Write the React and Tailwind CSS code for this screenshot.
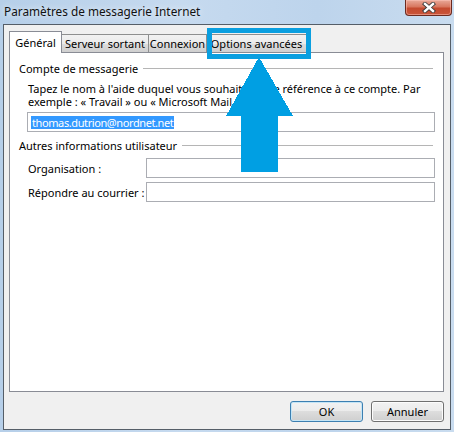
import React from "react";

const F = "font-['Noto_Sans','Liberation_Sans',sans-serif]";

function Tab({ label, w, selected, first }) {
  if (selected) {
    return (
      <div
        className={`relative z-10 -mb-px flex h-[22px] items-start justify-center whitespace-nowrap border border-b-0 border-[#898c95] bg-white pt-[3px] ${w}`}
      >
        <span className="leading-[15px]">{label}</span>
      </div>
    );
  }
  return (
    <div
      className={`${first ? "" : "-ml-px"} flex h-[18px] items-center justify-center whitespace-nowrap border border-b-0 border-[#8e8f8f] bg-[linear-gradient(#f2f2f2_0%,#ebebeb_50%,#dddddd_50%,#cfcfcf_100%)] ${w}`}
    >
      <span className="leading-[15px]">{label}</span>
    </div>
  );
}

function GroupHeader({ label, mt }) {
  return (
    <div className={`flex h-[15px] items-center pl-[9px] pr-[10px] ${mt}`}>
      <span className="leading-[15px] whitespace-nowrap">{label}</span>
      <div className="ml-[5px] h-px flex-1 bg-[#b5b5b5]" />
    </div>
  );
}

function TextBox({ className = "", children }) {
  return (
    <div
      className={`flex h-[20px] items-center border border-[#abadb3] bg-white pl-[2px] ${className}`}
    >
      {children}
    </div>
  );
}

export default function App() {
  return (
    <div
      className={`relative h-[432px] w-[454px] overflow-hidden bg-[linear-gradient(90deg,#b6cfe9,#c6daef_40%,#bdd4ec_70%,#c9dcef)] text-[11px] text-black ${F}`}
    >
      {/* Title bar */}
      <div className="flex h-[24px] items-start justify-between">
        <span className="pl-[4px] pt-[3px] text-[11.8px] leading-[16px] text-[#111] [text-shadow:0_0_6px_rgba(255,255,255,0.9)]">
          Paramètres de messagerie Internet
        </span>
        <div className="mr-[2px] flex h-[16px] w-[47px] items-center justify-center rounded-b-[4px] border border-t-0 border-[#6b2a1f] bg-[linear-gradient(#e9a999_0%,#d8775f_45%,#c44a2f_55%,#c9553a_100%)] shadow-[inset_0_0_0_1px_rgba(255,200,190,0.5)]">
          <svg width="14" height="11" viewBox="0 0 14 11">
            <path d="M3 2 L11 9 M11 2 L3 9" stroke="#3a3a3a" strokeWidth="4.2" strokeLinecap="square" />
            <path d="M3 2 L11 9 M11 2 L3 9" stroke="#ffffff" strokeWidth="2.4" strokeLinecap="square" />
          </svg>
        </div>
      </div>

      {/* Window body */}
      <div className="mx-[3px] flex h-[406px] flex-col border border-[#555e68] bg-[#f0f0f0] pl-[5px] pr-[6px] pt-[7px] pb-[7px]">
        {/* Tabs */}
        <div className="flex h-[20px] items-end">
          <Tab label="Général" w="w-[53px]" selected />
          <Tab label="Serveur sortant" w="w-[88px] -ml-px" first />
          <Tab label="Connexion" w="w-[59px]" />
          <Tab label="Options avancées" w="w-[101px]" />
        </div>

        {/* Panel */}
        <div className="flex h-[340px] flex-col border border-[#898c95] bg-white">
          <GroupHeader label="Compte de messagerie" mt="mt-[8px]" />
          <p className="mt-[6px] pl-[18px] leading-[13px] whitespace-nowrap">
            Tapez le nom à l'aide duquel vous souhaitez faire référence à ce compte. Par
            <br />
            exemple : « Travail » ou « Microsoft Mail Server ».
          </p>
          <TextBox className="ml-[17px] mr-[8px] mt-[4px]">
            <span className="ml-px inline-block h-[13px] bg-[#3399ff] px-px leading-[13px] tracking-[-0.4px] text-white">
              thomas.dutrion@nordnet.net
            </span>
          </TextBox>

          <GroupHeader label="Autres informations utilisateur" mt="mt-[6px]" />
          <div className="mt-[5px] flex items-center">
            <span className="w-[136px] shrink-0 whitespace-nowrap pl-[18px] leading-[15px]">Organisation :</span>
            <TextBox className="mr-[8px] flex-1" />
          </div>
          <div className="mt-[4px] flex items-center">
            <span className="w-[136px] shrink-0 whitespace-nowrap pl-[18px] leading-[15px]">Répondre au courrier :</span>
            <TextBox className="mr-[8px] flex-1" />
          </div>
        </div>

        {/* Buttons */}
        <div className="mt-[9px] flex justify-end gap-[8px]">
          <button className="flex h-[21px] w-[73px] items-center justify-center rounded-[3px] border border-[#3c7fb1] bg-[linear-gradient(#f2f2f2_0%,#ebebeb_50%,#dddddd_50%,#cfcfcf_100%)] leading-[15px] shadow-[inset_0_0_0_1px_#c4e5f6]">
            OK
          </button>
          <button className="flex h-[21px] w-[73px] items-center justify-center rounded-[3px] border border-[#707070] bg-[linear-gradient(#f2f2f2_0%,#ebebeb_50%,#dddddd_50%,#cfcfcf_100%)] leading-[15px] shadow-[inset_0_0_0_1px_#fcfcfc]">
            Annuler
          </button>
        </div>
      </div>

      {/* Highlight box around "Options avancées" tab */}
      <div className="pointer-events-none absolute left-[207px] top-[28px] h-[31px] w-[104px] border-[5px] border-[#0a9fe0]" />

      {/* Arrow */}
      <svg
        className="pointer-events-none absolute left-0 top-0"
        width="454"
        height="432"
        viewBox="0 0 454 432"
      >
        <polygon
          points="259,57 293,116 278,116 278,172 241,172 241,116 226,116"
          fill="#009fe3"
          shapeRendering="crispEdges"
        />
      </svg>
    </div>
  );
}
